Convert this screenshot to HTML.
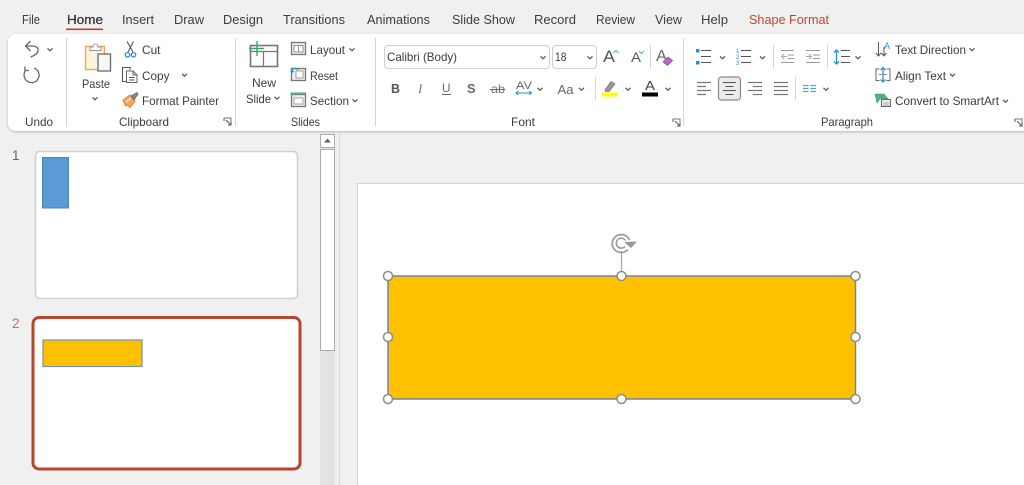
<!DOCTYPE html>
<html lang="en">
<head>
<meta charset="utf-8">
<title>PowerPoint</title>
<style>
html,body{margin:0;padding:0;width:1024px;height:485px;overflow:hidden;background:#f0f0f0}
svg{display:block;position:absolute;left:0;top:0;filter:blur(.3px)}
text{font-family:"Liberation Sans",sans-serif;font-size:12px;fill:#3c3c3c}
.tab text{font-size:13px}
.g{fill:none;stroke:#666;stroke-width:1.300}
.l{stroke:#555;stroke-width:1.100;fill:none}
.lt{stroke:#9a9a9a;stroke-width:1.100;fill:none}
.al{stroke:#777;stroke-width:1.300;fill:none}
.b{stroke:#2b8fd8;stroke-width:1.300;fill:none}
</style>
</head>
<body>
<svg width="1024" height="485" viewBox="0 0 1024 485" xmlns="http://www.w3.org/2000/svg">
<defs>
<filter id="sh" x="-2%" y="-10%" width="104%" height="125%"><feDropShadow dx="0" dy="1" stdDeviation="1.200" flood-color="#000" flood-opacity=".25"/></filter>
<path id="ch" d="M-2.500 -1.200L0 1.300L2.500 -1.200" fill="none" stroke="#555" stroke-width="1.200"/>
<g id="dl"><path d="M0 0H7V7" fill="none" stroke="#777"/><path d="M0 0V3M2 2L7 7M4 7H7V4" fill="none" stroke="#555"/></g>
</defs>
<rect width="1024" height="485" fill="#f0f0f0"/>

<!-- Tabs -->
<g class="tab">
<text x="22" y="24" textLength="18" lengthAdjust="spacingAndGlyphs">File</text>
<text x="67" y="24" textLength="36" lengthAdjust="spacingAndGlyphs" style="fill:#333;stroke:#333;stroke-width:.25">Home</text>
<text x="122" y="24" textLength="32" lengthAdjust="spacingAndGlyphs">Insert</text>
<text x="174" y="24" textLength="30" lengthAdjust="spacingAndGlyphs">Draw</text>
<text x="223" y="24" textLength="40" lengthAdjust="spacingAndGlyphs">Design</text>
<text x="283" y="24" textLength="62" lengthAdjust="spacingAndGlyphs">Transitions</text>
<text x="367" y="24" textLength="63" lengthAdjust="spacingAndGlyphs">Animations</text>
<text x="452" y="24" textLength="63" lengthAdjust="spacingAndGlyphs">Slide Show</text>
<text x="534" y="24" textLength="42" lengthAdjust="spacingAndGlyphs">Record</text>
<text x="596" y="24" textLength="39" lengthAdjust="spacingAndGlyphs">Review</text>
<text x="655" y="24" textLength="27" lengthAdjust="spacingAndGlyphs">View</text>
<text x="701" y="24" textLength="27" lengthAdjust="spacingAndGlyphs">Help</text>
<text x="749" y="24" textLength="80" lengthAdjust="spacingAndGlyphs" style="fill:#c0462a">Shape Format</text>
</g>
<rect x="66" y="28.500" width="37" height="1.600" fill="#b7472a"/>

<!-- Ribbon -->
<path d="M16 34H1030V131H16a8 8 0 0 1-8-8V42a8 8 0 0 1 8-8z" fill="#fff" filter="url(#sh)"/>
<g stroke="#d6d6d6" stroke-width="1">
<path d="M66.500 38V126M235.500 38V126M375.500 38V126M683.500 38V126"/>
<path d="M650.500 45V69M595.500 77V100M773.500 45V69M827.500 45V69M795.500 77V100"/>
</g>

<!-- Undo -->
<path d="M30.500 41L25.500 46L30.500 51M25.500 46H32.500C40 46 40.500 54 30.500 57" class="g"/>
<use href="#ch" x="50" y="49.500"/>
<path d="M25 66.500V70.500H29M34 68A7.500 7.500 0 1 1 25.800 70.300" class="g"/>
<text x="25" y="126" textLength="28" lengthAdjust="spacingAndGlyphs">Undo</text>

<!-- Clipboard -->
<rect x="85.500" y="46.500" width="19" height="23" fill="#fdf3e0" stroke="#eeac4c" stroke-width="1.500"/>
<path d="M90 50.500V47H93C93 43 98 43 98 47H101V50.500Z" fill="#fff" stroke="#999"/>
<rect x="98" y="54" width="12.500" height="17" fill="#f7f7f7" stroke="#6a6a6a" stroke-width="1.300"/>
<text x="82" y="88" textLength="28" lengthAdjust="spacingAndGlyphs">Paste</text>
<use href="#ch" x="95" y="98.500"/>
<!-- Scissors -->
<path d="M127 41.500L133 52M133.500 41.500L128 52" class="l"/>
<circle cx="127.500" cy="54.800" r="2.200" class="b"/><circle cx="133.500" cy="54.800" r="2.200" class="b"/>
<text x="142" y="54" textLength="18.500" lengthAdjust="spacingAndGlyphs">Cut</text>
<!-- Copy -->
<path d="M128 81.500H122.500V67.500H130V70" class="l"/>
<path d="M126.500 71H133L137 75V82.500H126.500Z M133 71V75H137" fill="#fff" stroke="#666"/>
<path d="M129 77.500H134.500M129 80H134.500" class="l" stroke-width=".8"/>
<text x="142" y="80" textLength="27.500" lengthAdjust="spacingAndGlyphs">Copy</text>
<use href="#ch" x="184.500" y="75"/>
<!-- Painter -->
<path d="M123 100L130 95L135 101L130 107.500L127 105L125.500 106Z" fill="#f5a65b" stroke="#e8812e" stroke-width="1"/>
<path d="M126 102L131 98" stroke="#fff" stroke-width="1"/>
<path d="M131 96L137 92.500L138 94L134 100Z" fill="#888" stroke="#666" stroke-width=".8"/>
<text x="142" y="105" textLength="77" lengthAdjust="spacingAndGlyphs">Format Painter</text>
<text x="119" y="126" textLength="50" lengthAdjust="spacingAndGlyphs">Clipboard</text>
<use href="#dl" x="224" y="118"/>

<!-- Slides -->
<rect x="250.500" y="45.500" width="27" height="21" fill="#fdfdfd" stroke="#777" stroke-width="1.600"/>
<path d="M250.500 51.500H277.500M263.500 51.500V66.500" stroke="#777" stroke-width="1.200" fill="none"/>
<path d="M249 48.500H264M257 41V56" stroke="#39a868" stroke-width="1.400" fill="none"/>
<text x="252" y="87" textLength="24" lengthAdjust="spacingAndGlyphs">New</text>
<text x="246" y="103" textLength="25" lengthAdjust="spacingAndGlyphs">Slide</text>
<use href="#ch" x="277" y="98"/>

<rect x="291.500" y="42.500" width="14" height="12" fill="#ededed" stroke="#777" stroke-width="1.300"/>
<path d="M294 45.500H303V52H294ZM298.500 45.500V52" stroke="#777" stroke-width=".8" fill="#fff"/>
<text x="310" y="54" textLength="35" lengthAdjust="spacingAndGlyphs">Layout</text>
<use href="#ch" x="352" y="49.500"/>

<rect x="291.500" y="68.500" width="14" height="12" fill="#ededed" stroke="#777" stroke-width="1.300"/>
<rect x="296" y="71" width="7" height="7" fill="#fff" stroke="#888" stroke-width=".8"/>
<path d="M291.500 72C292 68 296 67 298 70M291 69.500L291.500 72.500L294 71" stroke="#2b8fd8" stroke-width="1.200" fill="none"/>
<text x="310" y="80" textLength="28" lengthAdjust="spacingAndGlyphs">Reset</text>

<rect x="291.500" y="94.500" width="14" height="12" fill="#ededed" stroke="#777" stroke-width="1.300"/>
<rect x="294" y="98" width="9" height="6" fill="#fff" stroke="#888" stroke-width=".7"/>
<path d="M290.500 93.300H306" stroke="#5bb585" stroke-width="1.800"/>
<text x="310" y="105" textLength="39" lengthAdjust="spacingAndGlyphs">Section</text>
<use href="#ch" x="355" y="100.500"/>
<text x="291" y="126" textLength="29" lengthAdjust="spacingAndGlyphs">Slides</text>

<!-- Font -->
<rect x="384.500" y="45.500" width="165" height="23" rx="3.500" fill="#fff" stroke="#cfcfcf"/>
<text x="387" y="61" textLength="70" lengthAdjust="spacingAndGlyphs">Calibri (Body)</text>
<use href="#ch" x="543" y="57.500"/>
<rect x="552.500" y="45.500" width="44" height="23" rx="3.500" fill="#fff" stroke="#cfcfcf"/>
<text x="555" y="61" textLength="11.500" lengthAdjust="spacingAndGlyphs">18</text>
<use href="#ch" x="590" y="57.500"/>
<text x="603" y="62" style="font-size:17px;fill:#555" textLength="12" lengthAdjust="spacingAndGlyphs">A</text>
<path d="M613.500 53L616 50.500L618.500 53" stroke="#4aa3df" fill="none"/>
<text x="631" y="62" style="font-size:13.500px;fill:#555" textLength="10" lengthAdjust="spacingAndGlyphs">A</text>
<path d="M639 51L641.500 53.500L644 51" stroke="#4aa3df" fill="none"/>
<text x="656" y="61" style="font-size:16px;fill:#666" textLength="11" lengthAdjust="spacingAndGlyphs">A</text>
<path d="M663 62L668 57L672.500 60.500L667.500 65.500Z" fill="#b56bc1" stroke="#9c4cab" stroke-width=".8"/>

<text x="391" y="93" style="font-weight:700;font-size:13px;fill:#555" textLength="9" lengthAdjust="spacingAndGlyphs">B</text>
<text x="418" y="93" style="font-style:italic;font-size:13px;font-family:'Liberation Serif',serif;fill:#777">I</text>
<text x="442" y="92" style="font-size:12px;fill:#666" textLength="8.500" lengthAdjust="spacingAndGlyphs">U</text>
<path d="M442 94.500H451" stroke="#666"/>
<text x="467" y="93" style="font-size:13px;font-weight:700;fill:#666" textLength="8.500" lengthAdjust="spacingAndGlyphs">S</text>
<text x="491" y="93" style="font-size:12px;fill:#777" textLength="14" lengthAdjust="spacingAndGlyphs">ab</text>
<path d="M490 89.500H505" stroke="#666"/>
<text x="516" y="89" style="font-size:11px;fill:#666" textLength="16" lengthAdjust="spacingAndGlyphs">AV</text>
<path d="M516.500 93H531M518.500 91L516 93L518.500 95M529 91L531.500 93L529 95" stroke="#2b8fd8" fill="none"/>
<use href="#ch" x="540" y="89"/>
<text x="557.500" y="94" style="font-size:13px;fill:#666" textLength="16" lengthAdjust="spacingAndGlyphs">Aa</text>
<use href="#ch" x="581.500" y="89"/>
<path d="M605 90L611 81.500L615 84L609 91.500L605.500 91.500Z" fill="#999" stroke="#777" stroke-width=".8"/>
<rect x="602" y="92.500" width="16" height="4" fill="#ffff00"/>
<use href="#ch" x="628" y="89"/>
<text x="645" y="90" style="font-size:13px;fill:#444" textLength="10" lengthAdjust="spacingAndGlyphs">A</text>
<rect x="642" y="92.500" width="16" height="4" fill="#000"/>
<use href="#ch" x="668" y="89"/>
<text x="511" y="126" textLength="24" lengthAdjust="spacingAndGlyphs">Font</text>
<use href="#dl" x="673" y="119"/>

<!-- Paragraph row 1 -->
<g fill="#2b8fd8">
<rect x="696" y="49" width="3.500" height="3.500"/><rect x="696" y="61" width="3.500" height="3.500"/>
</g>
<path d="M701 50.500H711M701 56.500H711M701 62.500H711" class="l"/>
<use href="#ch" x="722.500" y="57.500"/>
<text x="736" y="53" style="font-size:6px;fill:#2b8fd8">1</text>
<text x="736" y="59" style="font-size:6px;fill:#2b8fd8">2</text>
<text x="736" y="65" style="font-size:6px;fill:#2b8fd8">3</text>
<path d="M741 50.500H751M741 56.500H751M741 62.500H751" class="l"/>
<use href="#ch" x="762.500" y="57.500"/>
<path d="M781 50.500H794M788 55H794M788 58.500H794M781 62.500H794" class="lt"/>
<path d="M787 56.500H781.500M784 54L781.500 56.500L784 59" stroke="#aaa" fill="none"/>
<path d="M806 50.500H820M813 55H820M813 58.500H820M806 62.500H820" class="lt"/>
<path d="M806 56.500H811.500M809 54L811.500 56.500L809 59" stroke="#aaa" fill="none"/>
<path d="M841 50.500H850M841 56.500H850M841 62.500H850" class="l"/>
<path d="M836.500 50V64M834 52.500L836.500 50L839 52.500M834 61.500L836.500 64L839 61.500" class="b"/>
<use href="#ch" x="858" y="57.500"/>
<!-- Row 2 -->
<path d="M697 82.500H711M697 86.500H706M697 90.500H711M697 94.500H706" class="al"/>
<rect x="718.500" y="77" width="22" height="23" rx="3" fill="#ececec" stroke="#8a8a8a" stroke-width="1.200"/>
<path d="M723 82.500H736M725.500 86.500H733.500M723 90.500H736M725.500 94.500H733.500" class="l" stroke-width="1.300"/>
<path d="M748 82.500H762M753 86.500H762M748 90.500H762M753 94.500H762" class="al"/>
<path d="M774 82.500H788M774 86.500H788M774 90.500H788M774 94.500H788" class="al"/>
<path d="M803 85.500H808.500M810.500 85.500H816M803 88.500H808.500M810.500 88.500H816M803 91.500H808.500M810.500 91.500H816" stroke="#4aa3df" stroke-width="1.200" fill="none"/>
<use href="#ch" x="826" y="89"/>
<!-- Text tools -->
<path d="M878.500 42V56M875.800 53L878.500 56L881 53M884 47V56M881.500 53L884 56L886.500 53" stroke="#555" fill="none"/>
<text x="884" y="49" style="font-size:9px;fill:#2b8fd8" textLength="6" lengthAdjust="spacingAndGlyphs">A</text>
<text x="895" y="54" textLength="71" lengthAdjust="spacingAndGlyphs">Text Direction</text>
<use href="#ch" x="972" y="49.500"/>
<path d="M879.500 69H876V80.500H879.500M886.500 69H890V80.500H886.500" stroke="#666" fill="none"/>
<path d="M883 67.500V82M880.500 70L883 67.500L885.500 70M880.500 79.500L883 82L885.500 79.500" class="b"/>
<path d="M879 74.500H887" stroke="#888"/>
<text x="895" y="80" textLength="51" lengthAdjust="spacingAndGlyphs">Align Text</text>
<use href="#ch" x="952.500" y="75"/>
<path d="M875 94H884L888 99H880L877 103Z" fill="#53b27f" stroke="#3d9a68" stroke-width=".6"/>
<rect x="881.500" y="99.500" width="9" height="7" fill="#f0f0f0" stroke="#666"/>
<path d="M883 103H889M883 105H889" stroke="#888" stroke-width=".7"/>
<text x="895" y="105" textLength="104" lengthAdjust="spacingAndGlyphs">Convert to SmartArt</text>
<use href="#ch" x="1005.500" y="101"/>
<text x="821" y="126" textLength="52" lengthAdjust="spacingAndGlyphs">Paragraph</text>
<use href="#dl" x="1015" y="119"/>

<!-- Thumbnails pane -->
<text x="12" y="160" style="font-size:13.500px;fill:#666">1</text>
<text x="12" y="328" style="font-size:13.500px;fill:#e0654a">2</text>
<rect x="35.500" y="151.500" width="262" height="147" rx="4" fill="#fff" stroke="#cfcfcf" stroke-width="1.500"/>
<rect x="42.500" y="157.500" width="26" height="50.500" fill="#5b9bd5" stroke="#5282ae"/>
<rect x="33" y="317.500" width="267" height="151.500" rx="6" fill="#fff" stroke="#b7472a" stroke-width="3"/>
<rect x="43" y="340" width="99" height="26.500" fill="#ffc000" stroke="#6f94b4" stroke-width="1.200"/>

<!-- Scrollbar -->
<rect x="320" y="134" width="15" height="351" fill="#e3e3e3"/>
<rect x="320.500" y="134.500" width="14" height="13" fill="#fff" stroke="#ababab"/>
<path d="M327.500 138.500L331 142.500H324Z" fill="#666"/>
<rect x="320.500" y="149.500" width="14" height="201" fill="#fff" stroke="#ababab"/>
<path d="M339.500 134V485" stroke="#d8d8d8"/>

<!-- Main slide -->
<rect x="357.500" y="183.500" width="680" height="320" fill="#fff" stroke="#d2d2d2"/>
<path d="M621.500 251V276" stroke="#a6a6a6" stroke-width="1.200"/>
<path d="M629.500 240A9 9 0 1 0 628 249.500" fill="none" stroke="#999" stroke-width="1.700"/>
<path d="M625.500 240.500A5 5 0 1 0 625 246.500" fill="none" stroke="#999" stroke-width="1.500"/>
<path d="M624 242L637 241.500L631 248Z" fill="#999"/>
<rect x="388" y="276" width="467.500" height="123" fill="#ffc000" stroke="#6f8799" stroke-width="1.500"/>
<g fill="#fff" stroke="#8c8c8c" stroke-width="1.500">
<circle cx="388" cy="276" r="4.500"/><circle cx="621.500" cy="276" r="4.500"/><circle cx="855.500" cy="276" r="4.500"/>
<circle cx="388" cy="337" r="4.500"/><circle cx="855.500" cy="337" r="4.500"/>
<circle cx="388" cy="399" r="4.500"/><circle cx="621.500" cy="399" r="4.500"/><circle cx="855.500" cy="399" r="4.500"/>
</g>
</svg>
</body>
</html>
